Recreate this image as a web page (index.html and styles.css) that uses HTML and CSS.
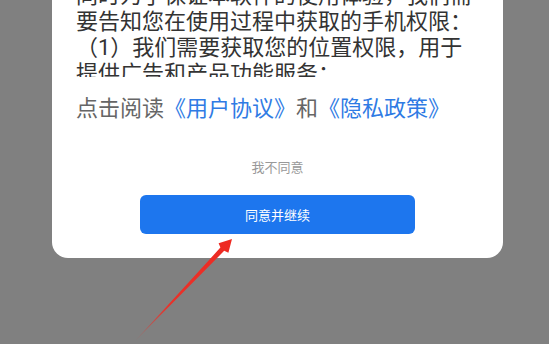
FILE: index.html
```html
<!DOCTYPE html>
<html>

<head>
  <meta charset="utf-8">
  <link rel="stylesheet" href="styles.css">
</head>

<body>
  <div class="dialog">
    <div class="terms">
      <p class="terms-text">同时为了保证本软件的使用体验，我们需要告知您在使用过程中获取的手机权限：（1）我们需要获取您的位置权限，用于提供广告和产品功能服务；</p>
    </div>

    <p class="read-line">点击阅读<a class="link">《用户协议》</a>和<a class="link">《隐私政策》</a></p>

    <div class="actions">
      <button class="btn-text">我不同意</button>
      <button class="btn-primary">同意并继续</button>
    </div>
  </div>

  <!-- annotation arrow -->
  <svg class="arrow" width="549" height="344" viewBox="0 0 549 344">
    <defs>
      <linearGradient id="arrow-fade" x1="135" y1="341" x2="232" y2="239" gradientUnits="userSpaceOnUse">
        <stop offset="0" stop-color="#e8322a" stop-opacity="0.2" />
        <stop offset="0.35" stop-color="#e8322a" stop-opacity="1" />
        <stop offset="1" stop-color="#ee2a22" />
      </linearGradient>
    </defs>
    <polygon fill="url(#arrow-fade)" points="135,341 220.4,247.6 218.6,243.2 232,239 228.4,252.8 224.2,250.8" />
  </svg>
</body>

</html>
```

FILE: styles.css
```css
:root {
  --backdrop: #808080;
  --text: #333333;
  --text-muted: #666666;
  --text-light: #999999;
  --link: #2f7be4;
  --primary: #1d76ee;
}

* {
  margin: 0;
  padding: 0;
  box-sizing: border-box;
  font-family: 'Roboto', 'Noto Sans CJK SC', sans-serif;
}

html,
body {
  width: 549px;
  height: 344px;
  overflow: hidden;
}

body {
  background-color: var(--backdrop);
  position: relative;
}

.dialog {
  margin-left: 52px;
  width: 451px;
  background-color: #ffffff;
  border-radius: 0 0 16px 16px;
  padding: 0 24px 24px;
}

/* scrolled permission text, first line partly out of view */
.terms {
  height: 77px;
  overflow: hidden;
}

.terms-text {
  margin-top: -17px;
  font-size: 22px;
  line-height: 26px;
  color: var(--text);
}

.read-line {
  margin-top: 19px;
  font-size: 22px;
  line-height: 26px;
  color: var(--text-muted);
  white-space: nowrap;
}

.link {
  color: var(--link);
  text-decoration: none;
}

.actions {
  display: flex;
  flex-direction: column;
  align-items: center;
}

button {
  border: none;
  background: none;
  cursor: pointer;
}

.btn-text {
  margin-top: 36px;
  font-size: 13px;
  line-height: 20px;
  color: var(--text-light);
}

.btn-primary {
  margin-top: 17px;
  width: 275px;
  height: 39px;
  border-radius: 6px;
  background-color: var(--primary);
  color: #ffffff;
  font-size: 13px;
}

.arrow {
  position: absolute;
  top: 0;
  left: 0;
  pointer-events: none;
}
```
